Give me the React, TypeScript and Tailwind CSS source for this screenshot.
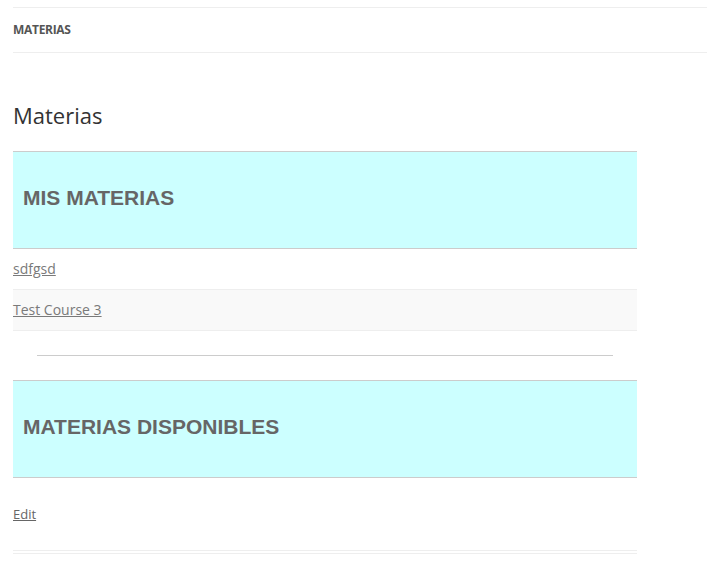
import React from 'react';

const openSans = { fontFamily: '"Open Sans", "Noto Sans", sans-serif' };

const SectionHeader: React.FC<{ title: string }> = ({ title }) => (
  <div className="bg-[#ccffff] border-y border-[#cccccc] h-[98px] flex items-center px-[10px] pb-[5px]">
    <h2 className="text-[21px] font-bold text-[#666666] leading-none" style={{ fontFamily: '"Liberation Sans", Arial, sans-serif' }}>
      {title}
    </h2>
  </div>
);

const courses = ['sdfgsd', 'Test Course 3'];

export default function App() {
  return (
    <div className="bg-white min-h-[588px] pl-[13px] text-[#666666]" style={openSans}>
      <div className="pt-[7px]">
        <div className="border-y border-[#eeeeee] h-[46px] flex items-center">
          <span className="text-[12px] font-bold text-[#555555] tracking-[-0.3px]">MATERIAS</span>
        </div>
      </div>

      <div className="w-[624px]">
        <h1 className="text-[22px] text-[#333333] mt-[47px] leading-[30px]">Materias</h1>

        <div className="mt-[21px]">
          <SectionHeader title="MIS MATERIAS" />
          <ul>
            {courses.map((c, i) => (
              <li
                key={c}
                className={`h-[41px] flex items-center pb-[2px] border-b border-[#eeeeee] ${i % 2 === 1 ? 'bg-[#f9f9f9]' : ''}`}
              >
                <a href="#" className="text-[14px] text-[#7a7a7a] underline">{c}</a>
              </li>
            ))}
          </ul>
        </div>

        <div className="px-[24px] pt-[24px]">
          <hr className="border-t border-[#cccccc]" />
        </div>

        <div className="mt-[24px]">
          <SectionHeader title="MATERIAS DISPONIBLES" />
        </div>

        <div className="h-[72px] flex items-center pt-[2px]">
          <a href="#" className="text-[13px] text-[#666666] underline">Edit</a>
        </div>

        <div className="border-y border-[#eeeeee] h-[4px]" />
      </div>
    </div>
  );
}
